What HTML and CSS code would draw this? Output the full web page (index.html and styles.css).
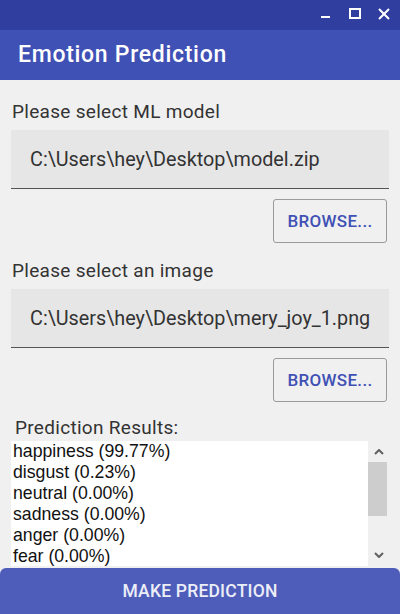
FILE: index.html
```html
<!DOCTYPE html>
<html>
<head>
<meta charset="utf-8">
<link rel="stylesheet" href="styles.css">
</head>
<body>
<div class="window">
  <div class="titlebar">
    <svg class="win-icon" width="12" height="12" viewBox="0 0 12 12"><rect x="1" y="8" width="9" height="2" fill="#fff"/></svg>
    <svg class="win-icon" width="12" height="12" viewBox="0 0 12 12"><rect x="1" y="1" width="10" height="9" fill="none" stroke="#fff" stroke-width="2"/></svg>
    <svg class="win-icon" width="12" height="12" viewBox="0 0 12 12"><path d="M1 1 L11 11 M11 1 L1 11" stroke="#fff" stroke-width="2"/></svg>
  </div>
  <div class="header">Emotion Prediction</div>
  <div class="content">
    <div class="label first">Please select ML model</div>
    <div class="field">C:\Users\hey\Desktop\model.zip</div>
    <div class="btn-row"><button class="browse">BROWSE...</button></div>

    <div class="label">Please select an image</div>
    <div class="field">C:\Users\hey\Desktop\mery_joy_1.png</div>
    <div class="btn-row"><button class="browse">BROWSE...</button></div>

    <div class="label results-label">Prediction Results:</div>
    <div class="list">
      <div class="list-items">
        <div>happiness (99.77%)</div>
        <div>disgust (0.23%)</div>
        <div>neutral (0.00%)</div>
        <div>sadness (0.00%)</div>
        <div>anger (0.00%)</div>
        <div>fear (0.00%)</div>
      </div>
      <div class="scrollbar">
        <svg class="arrow" width="10" height="6" viewBox="0 0 10 6"><path d="M1 5 L5 1 L9 5" fill="none" stroke="#606060" stroke-width="2"/></svg>
        <div class="thumb"></div>
        <div class="track-fill"></div>
        <svg class="arrow" width="10" height="6" viewBox="0 0 10 6"><path d="M1 1 L5 5 L9 1" fill="none" stroke="#606060" stroke-width="2"/></svg>
      </div>
    </div>
  </div>
  <button class="predict">MAKE PREDICTION</button>
</div>
</body>
</html>
```
FILE: styles.css
```css
html, body {
  margin: 0;
  padding: 0;
}
body {
  width: 400px;
  height: 614px;
  overflow: hidden;
  background: #f0f0f0;
  font-family: Roboto, "Noto Sans", sans-serif;
}
.window {
  display: flex;
  flex-direction: column;
  height: 614px;
}
.titlebar {
  height: 30px;
  background: #303f9f;
  display: flex;
  justify-content: flex-end;
  align-items: flex-start;
  gap: 17px;
  padding: 8px 10px 0 0;
  box-sizing: border-box;
}
.win-icon {
  display: block;
}
.header {
  height: 50px;
  background: #3f51b5;
  color: #fff;
  font-size: 23px;
  font-weight: 500;
  letter-spacing: 0.7px;
  line-height: 50px;
  padding-left: 18px;
  box-sizing: border-box;
}
.content {
  padding: 0 11px;
  display: flex;
  flex-direction: column;
}
.label {
  font-size: 19px;
  letter-spacing: 0.3px;
  line-height: 20px;
  color: #333;
  margin-top: 18px;
  margin-bottom: 8px;
  padding-left: 1px;
}
.label.first {
  margin-top: 22px;
}
.results-label {
  margin-top: 16px;
  margin-bottom: 3px;
  padding-left: 4px;
}
.field {
  height: 58px;
  background: #e6e6e6;
  border-bottom: 1px solid #555;
  display: flex;
  align-items: center;
  padding-left: 19px;
  font-size: 19.8px;
  color: #333;
}
.btn-row {
  display: flex;
  justify-content: flex-end;
  padding: 10px 2px 0 0;
}
.browse {
  width: 114px;
  height: 44px;
  border: 1px solid #9a9a9a;
  border-radius: 3px;
  background: #f0f0f0;
  color: #3f51b5;
  font-family: Roboto, sans-serif;
  font-weight: 500;
  font-size: 17px;
  letter-spacing: 0.3px;
  padding: 0;
}
.list {
  height: 125px;
  display: flex;
  background: #fff;
}
.list-items {
  flex: 1;
  overflow: hidden;
  padding-left: 2px;
  font-family: "Liberation Sans", Arial, sans-serif;
  font-size: 17.7px;
  line-height: 21px;
  color: #111;
}
.scrollbar {
  width: 21px;
  background: #f0f0f0;
  display: flex;
  flex-direction: column;
  align-items: center;
}
.arrow {
  display: block;
  margin: 8px 0 7px;
}
.scrollbar .arrow:last-child {
  margin: 6px 0 8px;
}
.thumb {
  width: 19px;
  height: 54px;
  background: #cdcdcd;
  margin-right: 2px;
}
.track-fill {
  flex: 1;
}
.predict {
  margin-top: auto;
  height: 46px;
  width: 400px;
  border: none;
  border-radius: 6px 6px 0 0;
  background: #4f5dba;
  color: #eceef8;
  font-family: Roboto, sans-serif;
  font-weight: 500;
  font-size: 17.5px;
  letter-spacing: 0.2px;
  padding: 0;
}
```
